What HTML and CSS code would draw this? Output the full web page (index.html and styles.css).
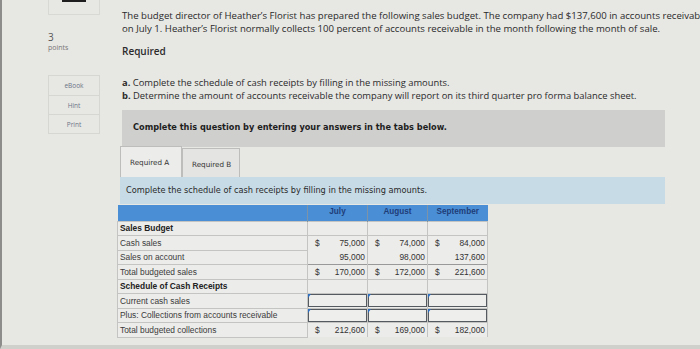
FILE: index.html
```html
<!DOCTYPE html>
<html>
<head>
<meta charset="utf-8">
<link rel="stylesheet" href="styles.css">
</head>
<body>
<div class="page">
  <aside class="side">
    <div class="topbox"><div class="topmark"></div></div>
    <div class="pts"><div class="num">3</div><div class="lbl">points</div></div>
    <div class="tools">
      <div class="tool">eBook</div>
      <div class="tool">Hint</div>
      <div class="tool">Print</div>
    </div>
  </aside>
  <main class="main">
    <p class="intro">The budget director of Heather’s Florist has prepared the following sales budget. The company had $137,600 in accounts receivable on July 1. Heather’s Florist normally collects 100 percent of accounts receivable in the month following the month of sale.</p>
    <h3 class="req">Required</h3>
    <ol class="parts">
      <li><b>a.</b> Complete the schedule of cash receipts by filling in the missing amounts.</li>
      <li><b>b.</b> Determine the amount of accounts receivable the company will report on its third quarter pro forma balance sheet.</li>
    </ol>
    <div class="instr">Complete this question by entering your answers in the tabs below.</div>
    <div class="tabs">
      <div class="tab active">Required A</div>
      <div class="tab">Required B</div>
    </div>
    <div class="prompt">Complete the schedule of cash receipts by filling in the missing amounts.</div>
    <table class="sched">
      <tr class="head"><th class="lab"></th><th>July</th><th>August</th><th>September</th></tr>
      <tr><td class="lab b">Sales Budget</td><td></td><td></td><td></td></tr>
      <tr class="v"><td class="lab">Cash sales</td><td><span class="d">$</span>75,000</td><td><span class="d">$</span>74,000</td><td><span class="d">$</span>84,000</td></tr>
      <tr class="v"><td class="lab">Sales on account</td><td>95,000</td><td>98,000</td><td>137,600</td></tr>
      <tr class="v tot"><td class="lab">Total budgeted sales</td><td><span class="d">$</span>170,000</td><td><span class="d">$</span>172,000</td><td><span class="d">$</span>221,600</td></tr>
      <tr><td class="lab b">Schedule of Cash Receipts</td><td></td><td></td><td></td></tr>
      <tr class="in"><td class="lab">Current cash sales</td><td><div class="box"></div></td><td><div class="box"></div></td><td><div class="box"></div></td></tr>
      <tr class="in"><td class="lab">Plus: Collections from accounts receivable</td><td><div class="box"></div></td><td><div class="box"></div></td><td><div class="box"></div></td></tr>
      <tr class="v"><td class="lab">Total budgeted collections</td><td><span class="d">$</span>212,600</td><td><span class="d">$</span>169,000</td><td><span class="d">$</span>182,000</td></tr>
    </table>
  </main>
</div>
</body>
</html>
```

FILE: styles.css
```css
html, body {
  margin: 0;
  padding: 0;
  width: 700px;
  height: 349px;
  overflow: hidden;
  background: #e7e7e4;
  color: #2b2b2b;
  font-family: "Open Sans", "Liberation Sans", sans-serif;
}
.page {
  display: flex;
  height: 349px;
  border-left: 2px solid #8d8d8b;
  border-bottom: 4px solid #cfcfcb;
  box-sizing: border-box;
}
.side {
  width: 118px;
  flex: none;
  padding-left: 46px;
  box-sizing: border-box;
}
.topbox {
  width: 52px;
  height: 15px;
  border: 1px solid #d8d8d5;
  border-top: none;
  box-sizing: border-box;
  display: flex;
  justify-content: center;
}
.topmark {
  width: 24px;
  height: 2px;
  background: #1e1e1e;
}
.pts {
  margin-top: 16px;
  color: #555;
}
.pts .num { font-size: 10px; line-height: 12px; }
.pts .lbl { font-size: 7px; line-height: 9px; color: #777; }
.tools {
  margin-top: 23px;
  width: 52px;
  border: 1px solid #d6d6d3;
  box-sizing: border-box;
}
.tool {
  height: 19px;
  line-height: 19px;
  text-align: center;
  font-size: 6.5px;
  color: #6a7585;
  border-top: 1px solid #d6d6d3;
  box-sizing: border-box;
}
.tool:first-child { border-top: none; }
.main {
  width: 600px;
  flex: none;
  padding-left: 2px;
}
.intro {
  margin: 9px 0 0;
  width: 600px;
  font-size: 9.6px;
  line-height: 13px;
  color: #2a2a2a;
}
.req {
  margin: 10px 0 0;
  font-size: 10px;
  font-weight: 600;
  line-height: 13px;
}
.parts {
  list-style: none;
  margin: 18px 0 0;
  padding: 0;
  font-size: 9.4px;
  line-height: 13px;
}
.parts b { font-weight: 700; }
.instr {
  margin-top: 8px;
  width: 543px;
  height: 37px;
  background: #cfcfcd;
  box-sizing: border-box;
  padding: 12px 0 0 11px;
  font-family: "DejaVu Sans", Verdana, sans-serif;
  font-weight: bold;
  font-size: 8.2px;
  color: #1e1e1e;
}
.tabs {
  display: flex;
  margin-top: -1px;
  margin-left: -2px;
  height: 31px;
  align-items: flex-end;
}
.tab {
  height: 30px;
  box-sizing: border-box;
  border: 1px solid #bdbdbb;
  border-bottom: none;
  padding: 11px 7px 0 9px;
  font-family: "DejaVu Sans", Verdana, sans-serif;
  font-size: 7.2px;
  color: #333;
  background: #e4e4e2;
}
.tab.active {
  height: 31px;
  background: #ececea;
  width: 62px;
}
.tab + .tab { width: 58px; height: 29px; }
.prompt {
  margin-left: -2px;
  width: 545px;
  height: 27px;
  box-sizing: border-box;
  background: #c6dbe6;
  padding: 8px 0 0 6px;
  font-family: "DejaVu Sans", Verdana, sans-serif;
  font-size: 8.2px;
  color: #2a2a2a;
}
.sched {
  margin-top: 1px;
  margin-left: -5px;
  border-collapse: collapse;
  font-family: "Liberation Sans", Arial, sans-serif;
  font-size: 8.4px;
  color: #333;
}
.sched th {
  background: #4a8ed6;
  height: 16px;
  padding: 0;
  font-size: 8.2px;
  font-weight: bold;
  color: #1f3d78;
  border-left: 1px solid #7d93a8;
  vertical-align: top;
  padding-top: 2px;
  box-sizing: border-box;
}
.sched th.lab { width: 190px; border-left: none; }
.sched th:not(.lab) { width: 60px; }
.sched td {
  height: 14.5px;
  padding: 0 2px;
  box-sizing: border-box;
  border: 1px solid #c4c4c2;
  background: #ececea;
  text-align: right;
  white-space: nowrap;
  line-height: 12px;
}
.sched td.lab {
  text-align: left;
  padding-left: 2px;
  color: #3b3b3b;
}
.sched td.b { font-weight: bold; color: #222; font-size: 8.4px; }
.sched tr.v td:not(.lab) { border-top: none; border-bottom: none; }
.sched tr.tot td:not(.lab) { border-top: 1px solid #999; }
.sched td .d { float: left; padding-left: 5px; }
.sched tr.in td:not(.lab) { padding: 0; }
.box {
  height: 13px;
  border: 1.5px solid #555a60;
  box-sizing: border-box;
  position: relative;
  background: #eeeeec;
}
.box::before {
  content: "";
  position: absolute;
  left: -1px;
  top: -1px;
  border-top: 4px solid #2f6fc0;
  border-right: 3px solid transparent;
}
```
